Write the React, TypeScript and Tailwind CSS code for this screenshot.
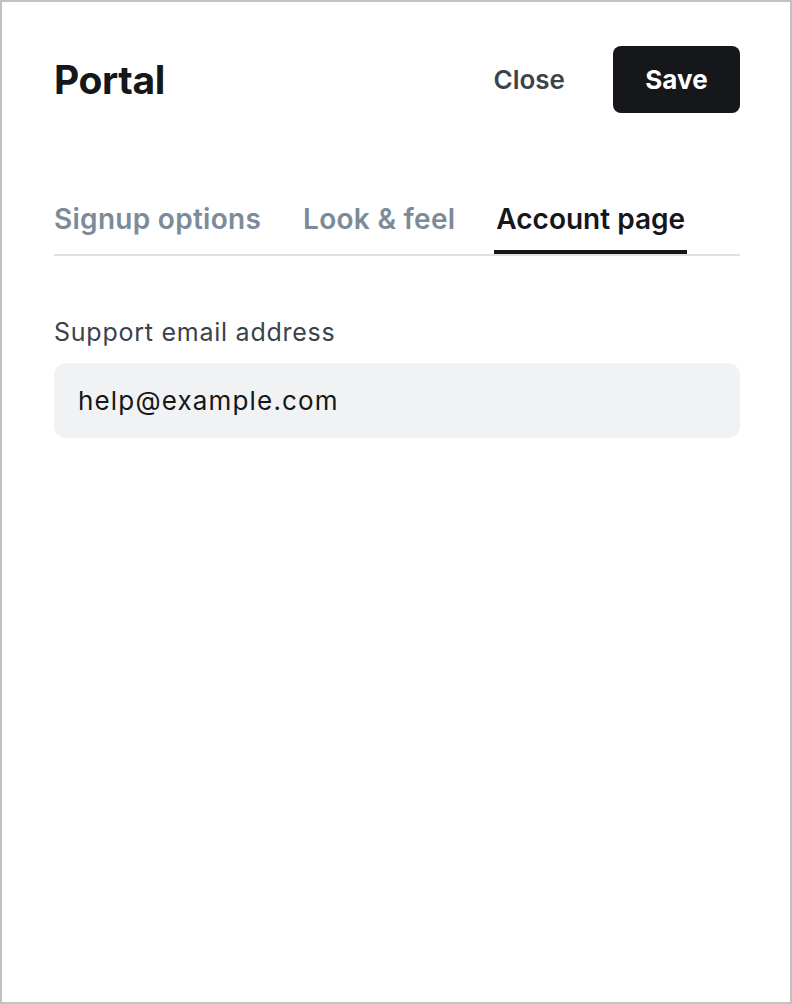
import React, { useState } from "react";

const tabs = ["Signup options", "Look & feel", "Account page"];

export default function App() {
  const [active, setActive] = useState("Account page");
  const [email, setEmail] = useState("help@example.com");

  return (
    <div
      className="h-[1004px] w-[792px] border-2 border-[#c2c2c2] bg-white pl-[52px] pr-[50px] pt-[44px]"
      style={{ fontFamily: "Inter, 'Noto Sans', sans-serif" }}
    >
      <div className="flex h-[67px] items-center justify-between">
        <h1 className="text-[39px] font-bold leading-none tracking-[-0.01em] text-[#15171a]">Portal</h1>
        <div className="flex items-center gap-[48px]">
          <button className="text-[26px] font-semibold text-[#3d434b]">Close</button>
          <button className="h-[67px] w-[127px] rounded-[8px] bg-[#16171a] text-[26px] font-bold text-white">
            Save
          </button>
        </div>
      </div>

      <div className="mt-[86px] flex gap-[42px] border-b-2 border-[#dfe1e5]">
        {tabs.map((t) => (
          <button
            key={t}
            onClick={() => setActive(t)}
            className={
              active === t
                ? "-mx-[3px] border-b-4 border-[#15171a] px-[2px] pb-[12px] pt-[1px] text-[28px] font-semibold leading-[38px] tracking-normal text-[#15171a]"
                : "border-b-4 border-transparent pb-[12px] pt-[1px] text-[28px] font-semibold leading-[38px] tracking-[0.01em] text-[#7c8b9a]"
            }
          >
            {t}
          </button>
        ))}
      </div>

      <label className="mt-[60px] block text-[25px] leading-[32px] tracking-[0.03em] text-[#3c424b]">
        Support email address
      </label>
      <input
        value={email}
        onChange={(e) => setEmail(e.target.value)}
        className="mt-[15px] h-[75px] w-full rounded-[12px] bg-[#f1f2f4] px-[24px] text-[26px] tracking-[0.045em] text-[#15171a] outline-none"
      />
    </div>
  );
}
